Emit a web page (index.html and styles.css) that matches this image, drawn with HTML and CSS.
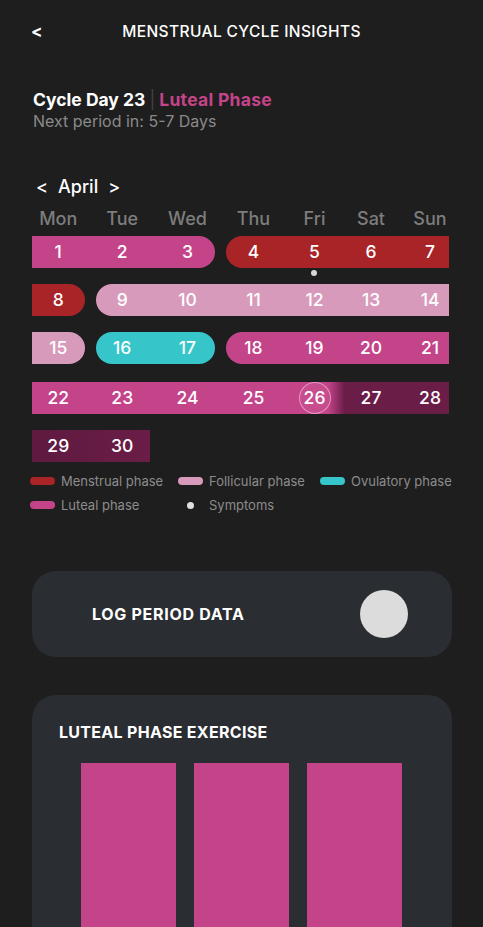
FILE: index.html
```html
<!DOCTYPE html>
<html lang="en">
<head>
<meta charset="utf-8">
<title>Menstrual Cycle Insights</title>
<link rel="stylesheet" href="styles.css">
</head>
<body>
<div class="screen">
  <header class="topbar">
    <span class="back">&lt;</span>
    <h1 class="title">MENSTRUAL CYCLE INSIGHTS</h1>
    <span class="spacer"></span>
  </header>

  <section class="summary">
    <div class="cycle-line"><span class="day">Cycle Day 23</span><span class="sep">|</span><span class="phase">Luteal Phase</span></div>
    <div class="next">Next period in: 5-7 Days</div>
  </section>

  <section class="calendar">
    <div class="month-nav"><span>&lt;</span><span class="month">April</span><span>&gt;</span></div>

    <div class="week weekdays">
      <span class="c1">Mon</span><span class="c2">Tue</span><span class="c3">Wed</span><span class="c4">Thu</span><span class="c5">Fri</span><span class="c6">Sat</span><span class="c7">Sun</span>
    </div>

    <div class="week">
      <div class="seg luteal g1-4 gap-r round-r"></div>
      <div class="seg menstrual g4-8 gap-l round-l"></div>
      <span class="num c1">1</span><span class="num c2">2</span><span class="num c3">3</span><span class="num c4">4</span><span class="num c5 sym">5</span><span class="num c6">6</span><span class="num c7">7</span>
    </div>

    <div class="week">
      <div class="seg menstrual g1-2 gap-r round-r"></div>
      <div class="seg follicular g2-8 gap-l round-l"></div>
      <span class="num c1">8</span><span class="num c2">9</span><span class="num c3">10</span><span class="num c4">11</span><span class="num c5">12</span><span class="num c6">13</span><span class="num c7">14</span>
    </div>

    <div class="week">
      <div class="seg follicular g1-2 gap-r round-r"></div>
      <div class="seg ovulatory g2-4 gap-l gap-r round-l round-r"></div>
      <div class="seg luteal g4-8 gap-l round-l"></div>
      <span class="num c1">15</span><span class="num c2">16</span><span class="num c3">17</span><span class="num c4">18</span><span class="num c5">19</span><span class="num c6">20</span><span class="num c7">21</span>
    </div>

    <div class="week week-4">
      <div class="seg luteal-fade g1-8"></div>
      <span class="num c1">22</span><span class="num c2">23</span><span class="num c3">24</span><span class="num c4">25</span><span class="num c5 today">26</span><span class="num c6">27</span><span class="num c7">28</span>
    </div>

    <div class="week">
      <div class="seg late g1-3 gap-r"></div>
      <span class="num c1">29</span><span class="num c2">30</span>
    </div>
  </section>

  <section class="legend">
    <div class="legend-item"><span class="swatch menstrual"></span>Menstrual phase</div>
    <div class="legend-item"><span class="swatch follicular"></span>Follicular phase</div>
    <div class="legend-item"><span class="swatch ovulatory"></span>Ovulatory phase</div>
    <div class="legend-item"><span class="swatch luteal"></span>Luteal phase</div>
    <div class="legend-item"><span class="swatch-box"><span class="dot"></span></span>Symptoms</div>
  </section>

  <section class="card log-card">
    <h2 class="card-title">LOG PERIOD DATA</h2>
    <span class="toggle"></span>
  </section>

  <section class="card exercise-card">
    <h2 class="card-title">LUTEAL PHASE EXERCISE</h2>
    <div class="bars">
      <div class="bar"></div>
      <div class="bar"></div>
      <div class="bar"></div>
    </div>
  </section>
</div>
</body>
</html>
```

FILE: styles.css
```css
* { box-sizing: border-box; margin: 0; padding: 0; }

html, body { background: #1e1e1e; }

body {
  font-family: Inter, "Open Sans", "DejaVu Sans", sans-serif;
  color: #ffffff;
  width: 483px;
  height: 927px;
  overflow: hidden;
}

.topbar {
  display: flex;
  align-items: center;
  height: 62px;
  padding: 0 33px;
}

.back, .spacer {
  width: 20px;
  font-size: 17px;
  font-weight: 700;
}

.back { margin-left: -2px; margin-right: 2px; }

.title {
  flex: 1;
  text-align: center;
  font-size: 15.5px;
  font-weight: 500;
  letter-spacing: 0.4px;
}

.summary {
  padding-left: 33px;
  margin-top: 27px;
}

.cycle-line {
  display: flex;
  align-items: center;
  font-size: 17.5px;
  font-weight: 700;
  line-height: 22px;
}

.sep {
  color: #434343;
  font-weight: 400;
  margin: 0 4px;
}

.phase { color: #c4448a; letter-spacing: 0.3px; }

.next {
  color: #8a8a8a;
  font-size: 16px;
  line-height: 20px;
}

.calendar {
  margin: 44px 0 0 32px;
  width: 417px;
}

.month-nav {
  display: flex;
  gap: 10px;
  padding-left: 4px;
  font-size: 18px;
  font-weight: 500;
  line-height: 24px;
}

.week {
  display: grid;
  grid-template-columns: 57.5px 65.5px 65px 67px 55px 58px 49px;
  grid-template-rows: 32px;
  align-items: center;
  margin-top: 16px;
}

.week > * { grid-row: 1; }

.weekdays {
  margin-top: 9px;
  grid-template-rows: 22px;
  color: #7d7d7d;
  font-size: 18px;
  font-weight: 500;
  line-height: 22px;
}

.weekdays > span { justify-self: center; }

.weekdays + .week { margin-top: 6px; }

.week-4 { margin-top: 18px; }

.c1 { grid-column: 1; padding-right: 5px; }
.c2 { grid-column: 2; }
.c3 { grid-column: 3; }
.c4 { grid-column: 4; }
.c5 { grid-column: 5; }
.c6 { grid-column: 6; }
.c7 { grid-column: 7; padding-left: 11px; }

.g1-2 { grid-column: 1 / 2; }
.g1-3 { grid-column: 1 / 3; }
.g1-4 { grid-column: 1 / 4; }
.g1-8 { grid-column: 1 / 8; }
.g2-4 { grid-column: 2 / 4; }
.g2-8 { grid-column: 2 / 8; }
.g4-8 { grid-column: 4 / 8; }

.seg { align-self: stretch; }
.gap-l { margin-left: 6px; }
.gap-r { margin-right: 5px; }
.round-l { border-top-left-radius: 16px; border-bottom-left-radius: 16px; }
.round-r { border-top-right-radius: 16px; border-bottom-right-radius: 16px; }

.menstrual { background: #a92427; }
.follicular { background: #d89abb; }
.ovulatory { background: #36c5c8; }
.luteal { background: #c4448a; }
.luteal-fade { background: linear-gradient(90deg, #c4448a 0%, #c4448a 71%, #6a1d47 75%, #6a1d47 100%); }
.late { background: linear-gradient(90deg, #5f1a40 0%, #6a1d47 100%); }

.num {
  position: relative;
  z-index: 1;
  justify-self: center;
  font-size: 17.5px;
  font-weight: 500;
  line-height: 20px;
}

.num.sym::after {
  content: "";
  position: absolute;
  left: 50%;
  top: calc(100% + 8px);
  width: 6px;
  height: 6px;
  margin-left: -3px;
  border-radius: 50%;
  background: #d8d8d8;
}

.num.today {
  width: 32px;
  height: 32px;
  display: flex;
  align-items: center;
  justify-content: center;
  border-radius: 50%;
  border: 1px solid rgba(240, 175, 212, 0.75);
  background: rgba(255, 255, 255, 0.05);
}

.legend {
  display: grid;
  grid-template-columns: 148px 142px auto;
  row-gap: 6px;
  margin: 10px 0 0 30px;
  font-size: 13px;
  color: #8c8c8c;
}

.legend-item {
  display: flex;
  align-items: center;
  gap: 6px;
  line-height: 18px;
}

.swatch {
  width: 25px;
  height: 8px;
  border-radius: 4px;
}

.swatch-box {
  width: 25px;
  display: flex;
  justify-content: center;
}

.dot {
  width: 7px;
  height: 7px;
  border-radius: 50%;
  background: #e0e0e0;
}

.card {
  background: #2a2d31;
  border-radius: 24px;
  margin-left: 32px;
  width: 420px;
}

.card-title {
  font-size: 16px;
  font-weight: 700;
  letter-spacing: 0.3px;
  line-height: 18px;
}

.log-card .card-title { letter-spacing: 0.7px; }

.log-card {
  margin-top: 57px;
  height: 86px;
  display: flex;
  align-items: center;
  justify-content: space-between;
  padding: 0 44px 0 60px;
}

.toggle {
  width: 48px;
  height: 48px;
  border-radius: 50%;
  background: #dcdcdc;
}

.exercise-card {
  margin-top: 38px;
  padding-top: 28px;
  padding-bottom: 40px;
}

.exercise-card .card-title { padding-left: 27px; }

.bars {
  display: flex;
  justify-content: center;
  gap: 18px;
  margin-top: 22px;
  padding-right: 2px;
}

.bar {
  width: 95px;
  height: 220px;
  background: #c4448a;
}
```
